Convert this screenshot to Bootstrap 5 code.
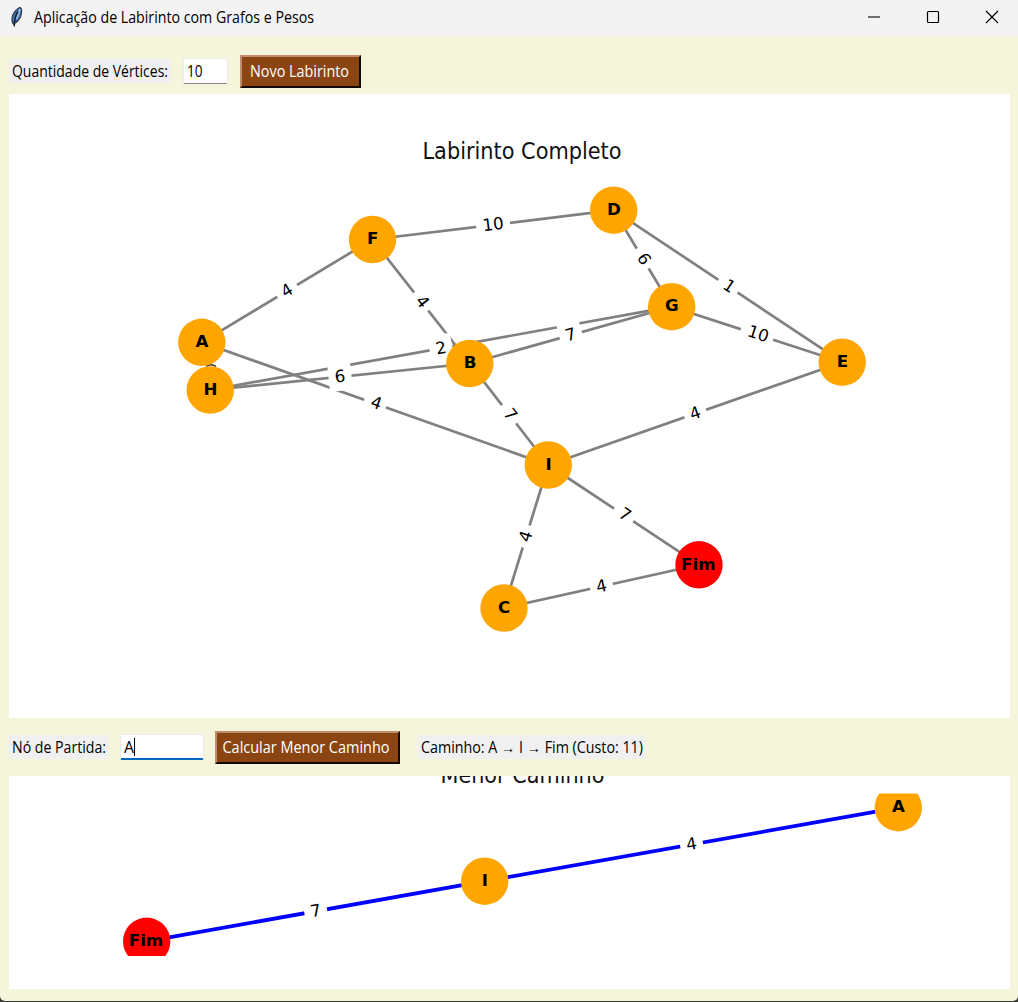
<!DOCTYPE html>
<html lang="pt-BR">
<head>
<meta charset="utf-8">
<meta name="viewport" content="width=device-width, initial-scale=1">
<title>Aplicação de Labirinto com Grafos e Pesos</title>
<link href="https://cdn.jsdelivr.net/npm/bootstrap@5.3.0/dist/css/bootstrap.min.css" rel="stylesheet">
<style>
  body { background: #3a3a36; font-family: "Open Sans", "Noto Sans", sans-serif; font-size: 15px; line-height: 20px; color: #000; }
  .app-window { height: 1001px; background: #f5f5dc; border-radius: 0 0 5px 5px; overflow: hidden; }
  .title-bar { height: 36px; background: #f3f3f3; padding: 0 10px 3px 9px; }
  .win-buttons { gap: 41px; margin-right: 7px; }
  .tool-row { height: 58px; padding-left: 9px; }
  .tool-row-top { padding-top: 12px; }
  .tk-label { background: #f0f0f0; height: 24px; display: flex; align-items: center; }
  .tk-entry { border: 1px solid #ececec; border-bottom: 1px solid #868686; border-radius: 2px; height: 26px; padding: 0 3px; background: #fff; display: flex; align-items: center; }
  .tk-entry.active { border-bottom: 2px solid #0067c0; }
  .tk-btn { --bs-btn-padding-x: 0; --bs-btn-padding-y: 0; background: #8b4513 !important; border: 2px solid; border-color: #c28d6c #120a04 #120a04 #c28d6c !important; border-radius: 0; height: 33px; color: #fff !important; display: flex; align-items: center; justify-content: center; padding-right: 3px; }
  .plot { background: #fff; margin: 0 8px 0 9px; }
  .plot svg, .ui-text { display: block; }
  .ui-text { height: 22px; font-size: 15.4px; overflow: visible; }
  .graph { font-family: "DejaVu Sans", sans-serif; }
</style>
</head>
<body>
<div class="app-window d-flex flex-column">
  <header class="title-bar d-flex align-items-center flex-shrink-0">
    <svg width="15" height="22" viewBox="0 0 15 22" class="flex-shrink-0">
      <path d="M4.500 18.500C1.500 14 2.500 6.500 10.500 1.500C13.500 1.300 13 7 11.500 11C10 14 8.500 16 6 17Z" fill="#3c6fae" stroke="#333940" stroke-width="1.100"/>
      <path d="M11 3C10 6 9.500 9 7.500 13" stroke="#96bde5" stroke-width="2" fill="none"/>
      <path d="M9 5.500C6.500 9 5.500 14 5.300 20.500" stroke="#18202c" stroke-width="1.400" fill="none"/>
    </svg>
    <svg class="ui-text flex-shrink-0 ms-2" width="290" height="22"><text x="2" y="16.500" textLength="280" lengthAdjust="spacingAndGlyphs">Aplicação de Labirinto com Grafos e Pesos</text></svg>
    <div class="win-buttons d-flex align-items-center ms-auto">
      <svg width="18" height="18" viewBox="0 0 18 18"><path d="M3 9H15" stroke="#000" stroke-width="1.100"/></svg>
      <svg width="18" height="18" viewBox="0 0 18 18"><rect x="3.500" y="3.500" width="11" height="11" rx="1" fill="none" stroke="#000" stroke-width="1.200"/></svg>
      <svg width="18" height="18" viewBox="0 0 18 18"><path d="M3 3L15 15M15 3L3 15" stroke="#000" stroke-width="1.200"/></svg>
    </div>
  </header>

  <div class="tool-row tool-row-top d-flex align-items-center flex-shrink-0">
    <div class="tk-label" style="width:162px"><svg class="ui-text" width="162"><text x="3" y="16.500" textLength="156" lengthAdjust="spacingAndGlyphs">Quantidade de Vértices:</text></svg></div>
    <div class="tk-entry" style="width:45px;margin-left:12px"><svg class="ui-text" width="38"><text x="0" y="16.500" textLength="15.500" lengthAdjust="spacingAndGlyphs">10</text></svg></div>
    <button class="btn tk-btn" style="width:121px;margin-left:12px"><svg class="ui-text" width="99"><text x="0" y="16.500" fill="#fff" textLength="99" lengthAdjust="spacingAndGlyphs">Novo Labirinto</text></svg></button>
  </div>

  <main class="plot flex-shrink-0" style="height:624px"><svg id="maze" class="graph" width="1001" height="624" viewBox="9 94 1001 624"></svg></main>

  <div class="tool-row d-flex align-items-center flex-shrink-0">
    <div class="tk-label" style="width:99px"><svg class="ui-text" width="99"><text x="3" y="16.500" textLength="94" lengthAdjust="spacingAndGlyphs">Nó de Partida:</text></svg></div>
    <div class="tk-entry active" style="width:84px;margin-left:12px"><svg class="ui-text" width="76"><text x="0" y="17" textLength="10" lengthAdjust="spacingAndGlyphs">A</text><path d="M10.500 2V20" stroke="#000"/></svg></div>
    <button class="btn tk-btn" style="width:185px;margin-left:11px"><svg class="ui-text" width="167"><text x="-0.500" y="16.500" fill="#fff" textLength="167" lengthAdjust="spacingAndGlyphs">Calcular Menor Caminho</text></svg></button>
    <div class="tk-label" style="width:227px;margin-left:18px"><svg class="ui-text" width="227"><text x="3" y="16.500" textLength="222" lengthAdjust="spacingAndGlyphs">Caminho: A → I → Fim (Custo: 11)</text></svg></div>
  </div>

  <section class="plot flex-shrink-0" style="height:213px"><svg id="route" class="graph" width="1001" height="213" viewBox="9 776 1001 213"></svg></section>
</div>

<script src="https://cdn.jsdelivr.net/npm/bootstrap@5.3.0/dist/js/bootstrap.bundle.min.js"></script>
<script>
  // Draws edges, then weight labels with their white boxes, then nodes on top.
  function drawGraph(id, cfg) {
    const n = cfg.nodes;
    let lines = '', weights = '', circles = '';
    for (const [a, b, w] of cfg.edges) {
      const [x1, y1] = n[a], [x2, y2] = n[b];
      lines += `<line x1="${x1}" y1="${y1}" x2="${x2}" y2="${y2}"/>`;
      let deg = Math.atan2(y2 - y1, x2 - x1) * 180 / Math.PI;
      if (deg > 90) deg -= 180;
      if (deg < -90) deg += 180;
      const bw = String(w).length > 1 ? 34 : 23;
      weights += `<g transform="translate(${(x1 + x2) / 2} ${(y1 + y2) / 2}) rotate(${deg})">` +
        `<rect x="${-bw / 2}" y="-14" width="${bw}" height="28" rx="4" fill="#fff"/>` +
        `<text x="${deg > 0 ? 1 : 0}" y="${deg > 0 ? 4.6 : 5.2}" text-anchor="middle">${w}</text></g>`;
    }
    for (const k in n) {
      const [x, y] = n[k];
      circles += `<circle cx="${x}" cy="${y}" r="23.7" fill="${k === 'Fim' ? '#ff0000' : '#ffa500'}"/>` +
        `<text x="${k === 'Fim' ? x - 0.7 : x + 0.2}" y="${y + 4.7}" text-anchor="middle" font-weight="700">${k}</text>`;
    }
    const clip = cfg.clip ? `<clipPath id="${id}-axes"><rect x="9" y="${cfg.clip[0]}" width="1001" height="${cfg.clip[1]}"/></clipPath>` : '';
    document.getElementById(id).innerHTML = clip +
      `<text x="${cfg.title[1]}" y="${cfg.title[2]}" font-size="22.6" textLength="${cfg.title[3]}" lengthAdjust="spacingAndGlyphs" fill="#111">${cfg.title[0]}</text>` +
      `<g font-size="16.67" ${cfg.clip ? `clip-path="url(#${id}-axes)"` : ''}>` +
      `<g stroke="${cfg.color}" stroke-width="${cfg.width}">${lines}</g>${weights}${cfg.extra || ''}${circles}</g>`;
  }

  drawGraph('maze', {
    title: ['Labirinto Completo', 422.5, 158.5, 199], color: '#808080', width: 2.7,
    nodes: { F: [372.5, 239.5], D: [613.7, 210.2], G: [671.7, 306.7], A: [201.8, 342.3], H: [210.2, 390], B: [469.8, 363.5], E: [842.2, 362.2], I: [548.3, 465], C: [504, 608], Fim: [699, 564.8] },
    edges: [['A','F',4],['A','I',4],['F','D',10],['F','B',4],['D','G',6],['D','E',1],['H','G',2],['H','B',6],['B','G',7],['B','I',7],['G','E',10],['E','I',4],['I','C',4],['I','Fim',7],['C','Fim',4]],
    // sliver of the A-H weight that shows between the two touching nodes
    extra: '<path d="M206 366.5Q211 363 216 366.500" fill="none" stroke="#333" stroke-width="1.500"/>'
  });
  drawGraph('route', {
    title: ['Menor Caminho', 440.5, 783, 164], color: '#0000ff', width: 3.8, clip: [793.5, 162.5],
    nodes: { Fim: [146.7, 941.3], I: [484.7, 881.2], A: [898.3, 807.7] },
    edges: [['Fim','I',7],['I','A',4]]
  });
</script>
</body>
</html>
